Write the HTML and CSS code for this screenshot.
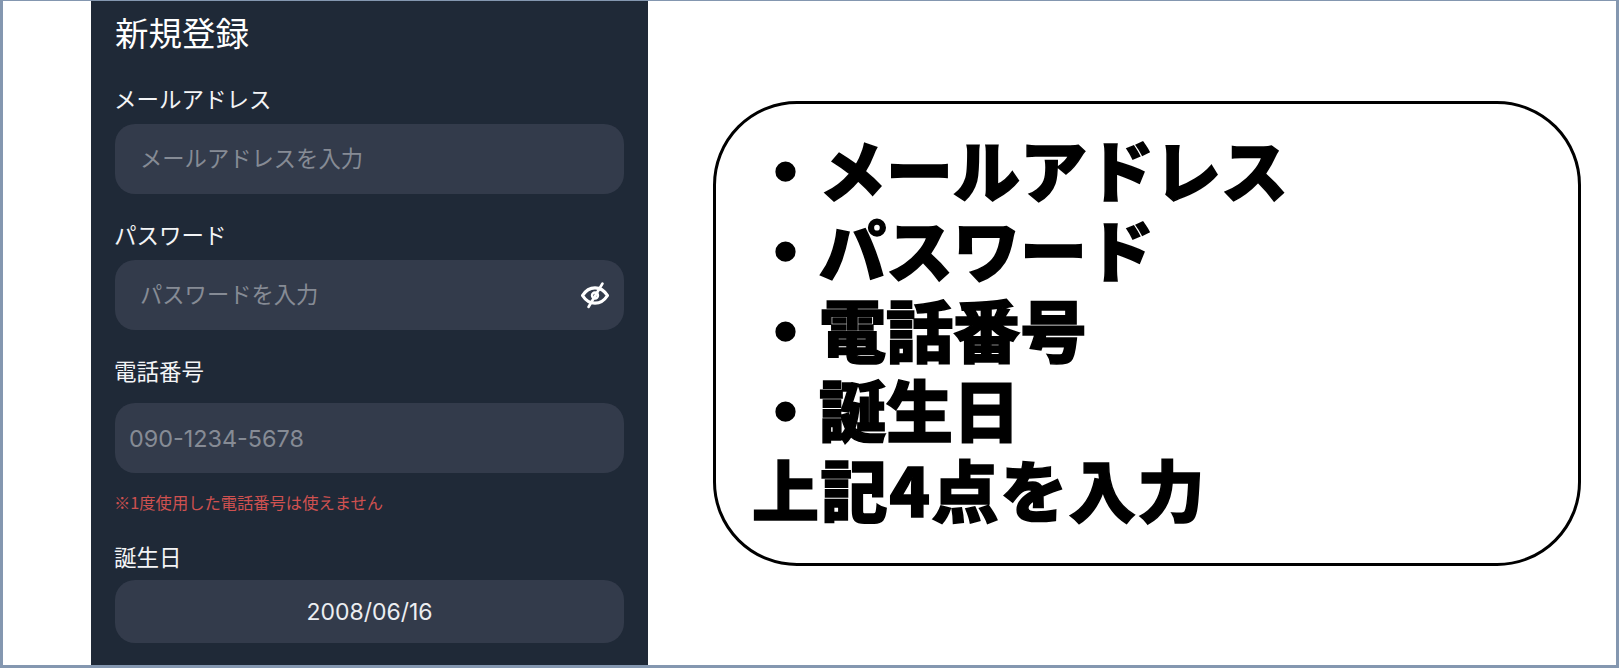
FILE: index.html
```html
<!DOCTYPE html>
<html lang="ja">
<head>
  <meta charset="UTF-8">
  <meta name="viewport" content="width=device-width, initial-scale=1.0">
  <title>新規登録</title>
  <link rel="stylesheet" href="styles.css">
</head>
<body>
  <div class="frame">
    <div class="panel">
      <h1 class="title">新規登録</h1>

      <div class="label">メールアドレス</div>
      <div class="field"><span class="placeholder">メールアドレスを入力</span></div>

      <div class="label label-pass">パスワード</div>
      <div class="field">
        <span class="placeholder">パスワードを入力</span>
        <svg class="eye" viewBox="0 0 28 28" fill="none" stroke="#fff" stroke-width="3.2" stroke-linecap="round" aria-hidden="true">
          <path d="M1.500 14.500C5 9 9 6.800 14 6.800s9 2.200 12.500 7.700c-3.500 5.500-7.500 7.700-12.500 7.700s-9-2.200-12.500-7.700z"/>
          <circle cx="14" cy="14.500" r="3" stroke-width="2.400"/>
          <path d="M21.500 2.500L7.500 26" stroke-width="2.600"/>
        </svg>
      </div>

      <div class="label label-tel">電話番号</div>
      <div class="field field-tel"><span class="placeholder placeholder-tel">090-1234-5678</span></div>
      <div class="note">※1度使用した電話番号は使えません</div>

      <div class="label label-birth">誕生日</div>
      <div class="field field-birth">2008/06/16</div>
    </div>

    <div class="callout">
      <div>・メールアドレス</div>
      <div>・パスワード</div>
      <div>・電話番号</div>
      <div>・誕生日</div>
      <div class="callout-last">上記4点を入力</div>
    </div>
  </div>
</body>
</html>
```

FILE: styles.css
```css
html, body {
  margin: 0;
  height: 100%;
  background: #8497b0;
  overflow: hidden;
}
body {
  font-family: "Noto Sans CJK JP", "Noto Sans", sans-serif;
}
.frame {
  display: flex;
  align-items: flex-start;
  box-sizing: border-box;
  width: 1613px;
  height: 664px;
  margin: 1px 0 0 3px;
  padding-left: 88px;
  background: #fff;
}
.panel {
  box-sizing: border-box;
  width: 557px;
  height: 664px;
  padding: 11px 24px 0;
  background: #1f2937;
  color: #fff;
}
.title {
  margin: 0 0 31px;
  font-size: 33.5px;
  font-weight: 400;
  line-height: 40px;
}
.label {
  margin-left: -1px;
  font-size: 22.5px;
  line-height: 30px;
  color: #f3f4f6;
}
.label-pass {
  margin-top: 25px;
}
.label-tel {
  margin-top: 25px;
}
.label-birth {
  margin-top: 27px;
}
.field {
  display: flex;
  align-items: center;
  justify-content: space-between;
  box-sizing: border-box;
  width: 509px;
  height: 70px;
  margin-top: 11px;
  padding: 0 15px 0 25px;
  border-radius: 20px;
  background: #333b4b;
}
.field-tel {
  margin-top: 18px;
  padding-left: 14px;
}
.field-birth {
  justify-content: center;
  height: 63px;
  margin-top: 9px;
  padding: 0;
  font-family: Inter, sans-serif;
  font-size: 23px;
  color: #eceef1;
}
.placeholder {
  margin-bottom: 4px;
  font-size: 22.3px;
  color: #868b95;
}
.placeholder-tel {
  margin-bottom: 0;
  font-family: Inter, sans-serif;
  font-size: 23.4px;
}
.eye {
  width: 28px;
  height: 28px;
}
.note {
  margin-top: 17px;
  margin-left: -1px;
  font-size: 16.3px;
  line-height: 24px;
  color: #cf5150;
}
.callout {
  box-sizing: border-box;
  width: 868px;
  height: 465px;
  margin: 100px 0 0 65px;
  padding: 24px 0 0 36px;
  border: 3px solid #000;
  border-radius: 84px;
  background: #fff;
  color: #000;
  font-size: 67px;
  font-weight: 900;
  line-height: 80px;
  white-space: nowrap;
  -webkit-text-stroke: 1.5px #000;
}
.callout-last {
  letter-spacing: 1.6px;
}
```
